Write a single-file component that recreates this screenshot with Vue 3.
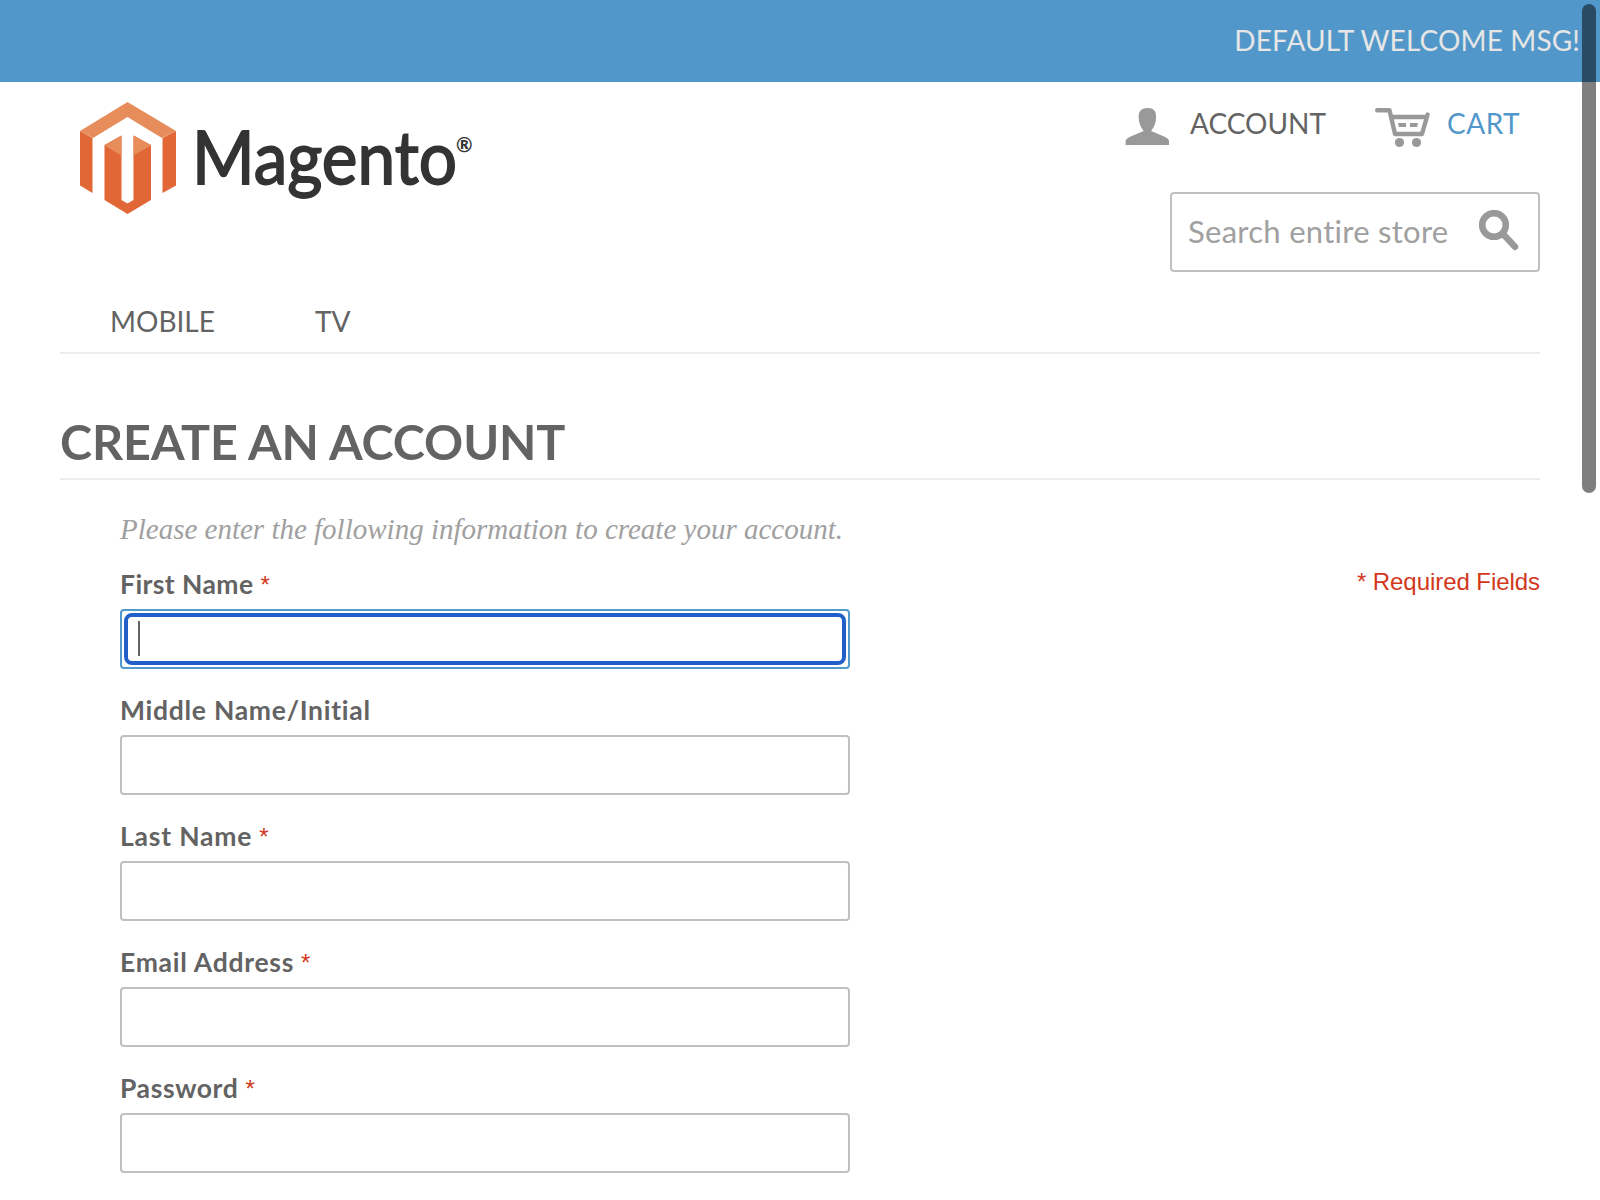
<script setup>
const fields = [
  { id: 'firstname', label: 'First Name', required: true, focused: true },
  { id: 'middlename', label: 'Middle Name/Initial', required: false },
  { id: 'lastname', label: 'Last Name', required: true },
  { id: 'email', label: 'Email Address', required: true },
  { id: 'password', label: 'Password', required: true },
]
</script>

<template>
  <div class="page">
    <div class="topbar"><span class="welcome">DEFAULT WELCOME MSG!</span></div>
    <header class="header">
      <svg class="logo" width="400" height="120" viewBox="0 0 400 120">
        <path fill="#e78c5b" d="M0 29 47.500 0 96 29 82 36 47.500 15 13 36z" />
        <path fill="#e16736" d="M0 29 12.500 36V91L0 83.500zM96 29 82.500 36V91L96 83.500z" />
        <path fill="#e16736" d="M24.500 43 41.500 33.500V98L47.500 101.500 53.500 98V33.500L71 43V98L47.500 112 24.500 98z" />
        <path fill="#e78c5b" d="M24.500 43.500 41.500 33.500V53.500zM71 43.500 53.500 33.500V53.500z" />
        <text x="112" y="82" class="brand" textLength="265" lengthAdjust="spacingAndGlyphs">Magento</text>
        <text x="376" y="50" class="reg">®</text>
      </svg>
      <div class="tools">
        <nav class="links">
          <a class="link account">
            <svg width="44" height="38" viewBox="-0.600 0 44 38"><path fill="#999" d="M22 0c6 0 8.500 3 8.500 8.500 0 6-2 11-5 14.500l13 5.500c3.500 1.700 5 3 5 5V37H0v-3.500c0-2 1.500-3.300 5-5L18 23c-3-3.500-5-8.500-5-14.500C13 3 16 0 22 0z" /></svg>
            <span>ACCOUNT</span>
          </a>
          <a class="link cart">
            <svg width="55" height="40" viewBox="0 0 55 40">
              <path fill="none" stroke="#999" stroke-width="4.400" stroke-linecap="round" stroke-linejoin="round" d="M2.200 2.200H14.500L20 26H47L52.600 6.500M16 9H51" />
              <path fill="#999" d="M23 15h8v4h-7zM35 15h8l-1 4h-7z" />
              <circle cx="24.500" cy="34.500" r="4.600" fill="#999" />
              <circle cx="41.500" cy="34.500" r="4.600" fill="#999" />
            </svg>
            <span>CART</span>
          </a>
        </nav>
        <div class="search">
          <span>Search entire store</span>
          <svg width="40" height="41" viewBox="0 0 40 41"><circle cx="15" cy="15" r="11.800" fill="none" stroke="#999" stroke-width="6.600" /><path d="M24 24 36 36.800" stroke="#999" stroke-width="6.500" stroke-linecap="round" /></svg>
        </div>
      </div>
    </header>
    <nav class="nav"><a>MOBILE</a><a>TV</a></nav>
    <main>
      <h1>CREATE AN ACCOUNT</h1>
      <div class="body">
        <form class="form">
          <p class="intro">Please enter the following information to create your account.</p>
          <div v-for="f in fields" :key="f.id" class="field" :class="f.id">
            <label><span>{{ f.label }}</span><em v-if="f.required">*</em></label>
            <div class="input" :class="{ focused: f.focused }"><div v-if="f.focused" class="ring"><i class="caret"></i></div></div>
          </div>
        </form>
        <p class="required">* Required Fields</p>
      </div>
    </main>
    <div class="scrollbar"></div>
  </div>
</template>

<style>
body { margin: 0; background: #fff; overflow: hidden; }
</style>
<style scoped>
* { box-sizing: border-box; }
.page { position: relative; width: 1600px; height: 1200px; overflow: hidden; background: #fff; color: #636363; font-family: Lato, "Liberation Sans", sans-serif; font-variant-ligatures: none; }
.topbar { height: 82px; background: #5297c9; display: flex; justify-content: flex-end; padding: 20px 20px 0 0; font-size: 28px; line-height: 40px; letter-spacing: .14px; color: #e6e6e6; }
.header { display: flex; justify-content: space-between; height: 210px; padding: 20px 60px 0 80px; }
.logo { display: block; }
.brand { font: 73px Lato, sans-serif; fill: #333; stroke: #333; stroke-width: 1.8px; }
.reg { font: bold 20px Lato, sans-serif; fill: #333; }
.tools { width: 415px; display: flex; flex-direction: column; align-items: flex-end; }
.links { width: 415px; height: 90px; display: flex; padding-top: 6px; }
.link { display: flex; font-size: 28px; line-height: 30px; }
.link svg { flex: none; }
.account { width: 250px; gap: 21px; }
.cart { gap: 17px; letter-spacing: .5px; color: #5297c9; }
.search { width: 370px; height: 80px; border: 2px solid #c0c0c0; border-radius: 4px; display: flex; justify-content: space-between; padding: 16px 19px 0 16px; font-size: 31px; line-height: 43px; letter-spacing: .28px; color: #a0a0a0; }
.nav { margin: 0 60px; height: 62px; border-bottom: 2px solid #ededed; padding: 8px 0 0 50px; display: flex; gap: 100px; font-size: 28px; line-height: 42px; }
main { margin: 0 60px; }
h1 { margin: 0; height: 126px; padding-top: 58px; border-bottom: 2px solid #ededed; font-size: 48.5px; line-height: 58px; font-weight: 700; letter-spacing: -.08px; }
.body { display: flex; justify-content: space-between; }
.form { width: 730px; margin-left: 60px; }
.intro { margin: 0; height: 87px; padding-top: 29px; font: italic 29px/40px "Liberation Serif", serif; color: #a0a0a0; white-space: nowrap; }
.field { height: 126px; }
label { display: flex; height: 42px; line-height: 35px; font-size: 26.5px; font-weight: 700; }
.firstname label { letter-spacing: .41px; }
.middlename label { letter-spacing: .72px; }
.lastname label { letter-spacing: .8px; }
.email label { letter-spacing: .73px; }
.password label { letter-spacing: .6px; }
em { font: 24px/35px "Liberation Sans", sans-serif; letter-spacing: 0; color: #d2371c; margin-left: 7px; }
.input { height: 60px; border: 2px solid #c0c0c0; border-radius: 4px; padding: 2px; }
.focused { border-color: #5299cc; }
.ring { height: 52px; border: 4px solid #215fc9; border-radius: 8px; padding: 4px 10px; }
.caret { display: block; width: 2px; height: 35px; background: #636363; }
.required { margin: 0; padding-top: 84px; font: 24px/36px "Liberation Sans", sans-serif; letter-spacing: -.06px; color: #d2371c; }
.scrollbar { position: absolute; left: 1582px; top: 4px; width: 14px; height: 489px; border-radius: 7px; background: rgba(0,0,0,.5); }
</style>
